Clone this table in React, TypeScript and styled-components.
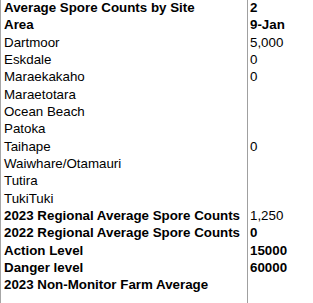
import { createGlobalStyle, styled } from "styled-components";

type RowType = {
  label: string;
  value?: string;
  bold?: boolean;
  valueBold?: boolean;
};

const rows: RowType[] = [
  { label: "Average Spore Counts by Site", value: "2", bold: true, valueBold: true },
  { label: "Area", value: "9-Jan", bold: true, valueBold: true },
  { label: "Dartmoor", value: "5,000" },
  { label: "Eskdale", value: "0" },
  { label: "Maraekakaho", value: "0" },
  { label: "Maraetotara" },
  { label: "Ocean Beach" },
  { label: "Patoka" },
  { label: "Taihape", value: "0" },
  { label: "Waiwhare/Otamauri" },
  { label: "Tutira" },
  { label: "TukiTuki" },
  { label: "2023 Regional Average Spore Counts", value: "1,250", bold: true },
  { label: "2022 Regional Average Spore Counts", value: "0", bold: true, valueBold: true },
  { label: "Action Level", value: "15000", bold: true, valueBold: true },
  { label: "Danger level", value: "60000", bold: true, valueBold: true },
  { label: "2023 Non-Monitor Farm Average", bold: true },
];

const App = () => {
  return (
    <>
      <GlobalStyle />
      <Sheet>
        {rows.map((row, index) => (
          <Row key={index}>
            <Cell $bold={row.bold}>{row.label}</Cell>
            <ValueCell $bold={row.valueBold}>{row.value}</ValueCell>
          </Row>
        ))}
        <Row $fill>
          <Cell />
          <ValueCell />
        </Row>
      </Sheet>
    </>
  );
};

const GlobalStyle = createGlobalStyle`
  html, body {
    margin: 0;
    padding: 0;
    background: #ffffff;
  }
  body {
    font-family: "Liberation Sans", Arial, sans-serif;
    color: #000000;
  }
`;

const Sheet = styled.div`
  display: flex;
  flex-direction: column;
  width: 313px;
  height: 303px;
  overflow: hidden;
  border-left: 1px solid #a6a6a6;
  box-sizing: border-box;
`;

const Row = styled.div<{ $fill?: boolean }>`
  display: grid;
  grid-template-columns: 246px 1fr;
  height: 17.33px;
  flex: ${(props) => (props.$fill ? "1" : "none")};
  margin-top: ${(props) => (props.$fill ? "0" : "0")};

  &:first-child {
    margin-top: -1px;
  }
`;

const Cell = styled.div<{ $bold?: boolean }>`
  padding-left: 3px;
  font-size: 13.33px;
  line-height: 17.33px;
  font-weight: ${(props) => (props.$bold ? 700 : 400)};
  white-space: nowrap;
  overflow: visible;
`;

const ValueCell = styled(Cell)`
  border-left: 1px solid #a0a0a0;
  padding-left: 2px;
`;

export default App;
